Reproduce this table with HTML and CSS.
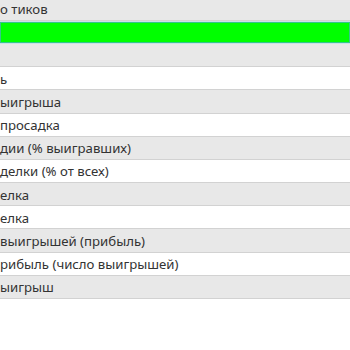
FILE: index.html
```html
<!DOCTYPE html>
<html lang="ru">
<head>
<meta charset="utf-8">
<link rel="stylesheet" href="styles.css">
</head>
<body>
<div class="table">
  <div class="row gray"><span class="label">о тиков</span></div>
  <div class="row gray bar-row"><div class="bar"></div></div>
  <div class="row gray"><span class="label"></span></div>
  <div class="row white"><span class="label">ь</span></div>
  <div class="row gray"><span class="label">ыигрыша</span></div>
  <div class="row white"><span class="label">просадка</span></div>
  <div class="row gray"><span class="label">дии (% выигравших)</span></div>
  <div class="row white"><span class="label">делки (% от всех)</span></div>
  <div class="row gray"><span class="label">елка</span></div>
  <div class="row white"><span class="label">елка</span></div>
  <div class="row gray"><span class="label">выигрышей (прибыль)</span></div>
  <div class="row white"><span class="label">рибыль (число выигрышей)</span></div>
  <div class="row gray"><span class="label">ыигрыш</span></div>
</div>
</body>
</html>
```
FILE: styles.css
```css
html, body {
  margin: 0;
  padding: 0;
  background: #ffffff;
}
body {
  font-family: "Noto Sans", "Open Sans", sans-serif;
  font-size: 13.2px;
  color: #333333;
  overflow: hidden;
  width: 350px;
  height: 350px;
}
.table {
  display: flex;
  flex-direction: column;
  margin-top: -2.2px;
}
.row {
  box-sizing: border-box;
  height: 23.17px;
  border-bottom: 1px solid #d2d2d2;
  display: flex;
  align-items: center;
  white-space: nowrap;
}
.gray { background: #e8e8e8; }
.white { background: #ffffff; }
.label {
  padding-top: 1px;
  line-height: 16px;
}
.bar-row {
  align-items: stretch;
  border-bottom: none;
}
.bar {
  flex: 1;
  box-sizing: border-box;
  background: #00ff00;
  border: 1px solid #34c68c;
  box-shadow: 0 0 0 1px #c9e0e8;
  margin: 1px 0 1px 0;
}
```
